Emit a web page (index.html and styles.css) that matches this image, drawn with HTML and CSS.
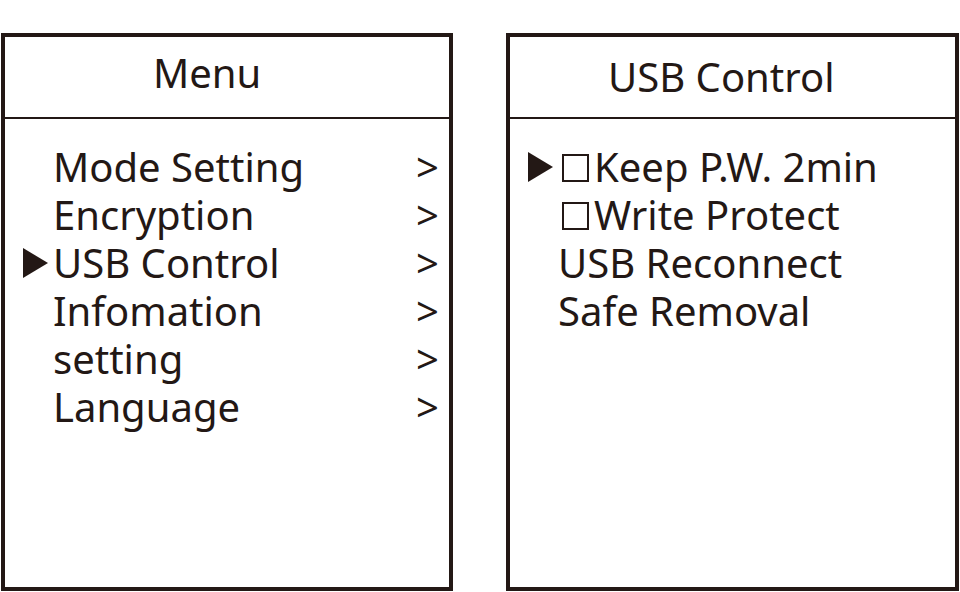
FILE: index.html
```html
<!DOCTYPE html>
<html lang="en">
<head>
  <meta charset="UTF-8">
  <meta name="viewport" content="width=device-width, initial-scale=1.0">
  <title>USB Control Menu</title>
  <link rel="stylesheet" href="styles.css">
</head>
<body>

  <div class="screens">

    <!-- main menu -->
    <section class="panel">
      <div class="panel-title title-menu">Menu</div>
      <ul class="list">
        <li class="row"><span class="mark"></span><span class="label">Mode Setting</span><span class="chev">&gt;</span></li>
        <li class="row"><span class="mark"></span><span class="label">Encryption</span><span class="chev">&gt;</span></li>
        <li class="row">
          <span class="mark">
            <svg class="arrow" width="25" height="30" viewBox="0 0 25 30"><polygon points="0,0 25,15 0,30" /></svg>
          </span>
          <span class="label">USB Control</span><span class="chev">&gt;</span>
        </li>
        <li class="row"><span class="mark"></span><span class="label">Infomation</span><span class="chev">&gt;</span></li>
        <li class="row"><span class="mark"></span><span class="label">setting</span><span class="chev">&gt;</span></li>
        <li class="row"><span class="mark"></span><span class="label">Language</span><span class="chev">&gt;</span></li>
      </ul>
    </section>

    <!-- usb control sub menu -->
    <section class="panel panel-right">
      <div class="panel-title title-usb">USB Control</div>
      <ul class="list">
        <li class="row">
          <span class="mark">
            <svg class="arrow" width="25" height="30" viewBox="0 0 25 30"><polygon points="0,0 25,15 0,30" /></svg>
          </span>
          <span class="box"></span><span class="label">Keep P.W. 2min</span>
        </li>
        <li class="row"><span class="mark"></span><span class="box"></span><span class="label">Write Protect</span></li>
        <li class="row"><span class="mark"></span><span class="label">USB Reconnect</span></li>
        <li class="row"><span class="mark"></span><span class="label">Safe Removal</span></li>
      </ul>
    </section>

  </div>

</body>
</html>
```

FILE: styles.css
```css
/* device screen mockup */

body {
  margin: 0;
  background-color: #fff;
  font-family: "Noto Sans", "Open Sans", sans-serif;
  color: #231815;
}

.screens {
  display: flex;
  gap: 53px;
  padding: 33px 0 0 1px;
}

.panel {
  box-sizing: border-box;
  width: 452px;
  height: 558px;
  border: 4px solid #231815;
}

.panel-right {
  width: 453px;
}

/* title bar */
.panel-title {
  font-size: 40px;
  height: 80px;
  line-height: 80px;
  border-bottom: 2px solid #231815;
  white-space: nowrap;
}

.title-menu {
  line-height: 71px;
  padding-left: 148px;
}

.title-usb {
  padding-left: 98px;
}

/* rows */
.list {
  list-style: none;
  margin: 0;
  padding: 24px 0 0 0;
}

.row {
  display: flex;
  align-items: baseline;
  font-size: 40px;
  line-height: 48px;
  white-space: nowrap;
}

.mark {
  width: 48px;
  flex-shrink: 0;
}

.arrow {
  margin-left: 18px;
  fill: #231815;
}

.box {
  display: inline-block;
  box-sizing: border-box;
  width: 27px;
  height: 28px;
  margin: 0 5px 0 4px;
  border: 2px solid #231815;
}

.chev {
  margin-left: auto;
  padding-right: 10px;
}
```
